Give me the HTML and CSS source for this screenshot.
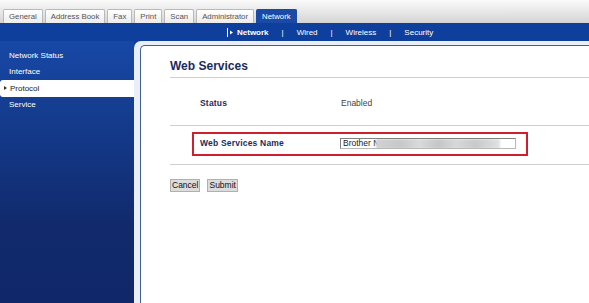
FILE: index.html
```html
<!DOCTYPE html>
<html lang="en">
<head>
    <meta charset="UTF-8">
    <meta name="viewport" content="width=device-width, initial-scale=1.0">
    <title>Web Services</title>
    <link rel="stylesheet" href="styles.css">
</head>
<body>
    <div class="header">
        <ul class="tabs">
            <li>General</li>
            <li>Address Book</li>
            <li>Fax</li>
            <li>Print</li>
            <li>Scan</li>
            <li>Administrator</li>
            <li class="active">Network</li>
        </ul>
    </div>
    <div class="subnav">
        <a class="current">
            <svg class="marker" width="8" height="9" viewBox="0 0 8 9">
                <line x1="0.5" y1="0" x2="0.5" y2="9" stroke="#fff" stroke-width="1"/>
                <polygon points="3,2.5 6,4.5 3,6.5" fill="#fff"/>
            </svg>Network</a>
        <span class="sep">|</span>
        <a>Wired</a>
        <span class="sep">|</span>
        <a>Wireless</a>
        <span class="sep">|</span>
        <a>Security</a>
    </div>
    <div class="page">
        <div class="sidebar">
            <ul class="menu">
                <li>Network Status</li>
                <li>Interface</li>
                <li class="active">Protocol</li>
                <li>Service</li>
            </ul>
        </div>
        <div class="main">
            <div class="frame">
                <div class="panel">
                    <h2 class="title">Web Services</h2>
                    <div class="row">
                        <span class="label">Status</span>
                        <span class="value">Enabled</span>
                    </div>
                    <div class="row row-name">
                        <div class="highlight">
                            <span class="label">Web Services Name</span>
                            <div class="input"><span class="plain">Brother N</span><span class="blurred"></span></div>
                        </div>
                    </div>
                    <div class="actions">
                        <button>Cancel</button>
                        <button>Submit</button>
                    </div>
                </div>
            </div>
        </div>
    </div>
</body>
</html>
```

FILE: styles.css
```css
body {
    font-family: "Liberation Sans", Arial, sans-serif;
    margin: 0;
    padding: 0;
    width: 589px;
    height: 303px;
    overflow: hidden;
    background-color: #fff;
}
.header {
    height: 23px;
    background: linear-gradient(#fbfbfb, #d4d4d4);
    display: flex;
    align-items: flex-end;
}
.tabs {
    list-style: none;
    margin: 0;
    padding: 0 0 0 3px;
    display: flex;
    gap: 2px;
}
.tabs li {
    height: 14px;
    line-height: 14px;
    padding: 0 5px;
    font-size: 7.8px;
    color: #555;
    background: linear-gradient(#ffffff, #ececec);
    border: 1px solid #b9b9b9;
    border-bottom: none;
    border-radius: 2px 2px 0 0;
    box-sizing: border-box;
}
.tabs li.active {
    background-color: #1a4aa6;
    background-image: none;
    border-color: #1a4aa6;
    color: #fff;
}
.subnav {
    height: 18px;
    background-color: #0f3f9d;
    display: flex;
    align-items: center;
    gap: 13px;
    padding-left: 227px;
    font-size: 8px;
    color: #fff;
}
.subnav a {
    color: #fff;
}
.subnav .current {
    font-weight: bold;
    display: flex;
    align-items: center;
}
.marker {
    margin-right: 2px;
}
.page {
    display: flex;
    height: 262px;
}
.sidebar {
    width: 134px;
    background: linear-gradient(#1748a6, #112a6c 70%, #10286a);
}
.menu {
    list-style: none;
    margin: 0;
    padding: 7px 0 0 0;
}
.menu li {
    height: 16px;
    line-height: 16px;
    padding-left: 9px;
    font-size: 8px;
    color: #fff;
}
.menu li.active {
    background-color: #fff;
    color: #222;
    border-radius: 3px 0 0 3px;
    padding-left: 4px;
    height: 17px;
    line-height: 17px;
}
.menu li.active::before {
    content: "";
    display: inline-block;
    border-left: 3px solid #333;
    border-top: 2px solid transparent;
    border-bottom: 2px solid transparent;
    margin-right: 3px;
    vertical-align: 1px;
}
.main {
    flex: 1;
    background-color: #0f3f9d;
}
.frame {
    height: 100%;
    box-sizing: border-box;
    background-color: #e9eef8;
    border-top-left-radius: 7px;
    padding: 4px 0 0 6px;
}
.panel {
    height: 100%;
    box-sizing: border-box;
    background-color: #fff;
    border-left: 1px solid #42608f;
    border-top: 1px solid #42608f;
    border-top-left-radius: 5px;
    padding: 13px 0 0 29px;
}
.title {
    margin: 0;
    font-size: 12px;
    line-height: 14px;
    color: #1c2b5e;
    padding-bottom: 4px;
    border-bottom: 1px solid #cfcfcf;
}
.row {
    display: flex;
    padding: 20px 0 16px 30px;
    border-bottom: 1px solid #cfcfcf;
    font-size: 8.5px;
    line-height: 11px;
}
.label {
    width: 141px;
    font-weight: bold;
    color: #1c2b5e;
    letter-spacing: 0.2px;
}
.value {
    color: #444;
}
.row-name {
    padding: 6px 0 8px 22px;
}
.highlight {
    width: 336px;
    height: 24px;
    box-sizing: border-box;
    border: 2px solid #cf1f2c;
    display: flex;
    align-items: center;
    padding: 0 0 1px 6px;
}
.highlight .label {
    width: 140px;
}
.input {
    width: 176px;
    height: 11px;
    box-sizing: border-box;
    border: 1px solid #808080;
    border-bottom-color: #b8b8b8;
    border-right-color: #b8b8b8;
    font-size: 8.5px;
    line-height: 9px;
    color: #222;
    padding-left: 2px;
    white-space: nowrap;
    overflow: hidden;
    display: flex;
    align-items: center;
}
.plain {
    flex: none;
}
.blurred {
    flex: none;
    margin-left: -3px;
    width: 124px;
    height: 10px;
    background: linear-gradient(90deg, #d2d2d2, #c8c8c8 20%, #dadada 35%, #c6c6c6 50%, #d8d8d8 65%, #c9c9c9 80%, #e2e2e2);
    filter: blur(1px);
}
.actions {
    display: flex;
    gap: 7px;
    padding-top: 14px;
}
button {
    font-family: "Liberation Sans", Arial, sans-serif;
    font-size: 8.5px;
    height: 13px;
    line-height: 11px;
    padding: 0 1px;
    background-color: #dcdcdc;
    border: 1px solid #b0b0b0;
    color: #111;
    cursor: pointer;
}
```
